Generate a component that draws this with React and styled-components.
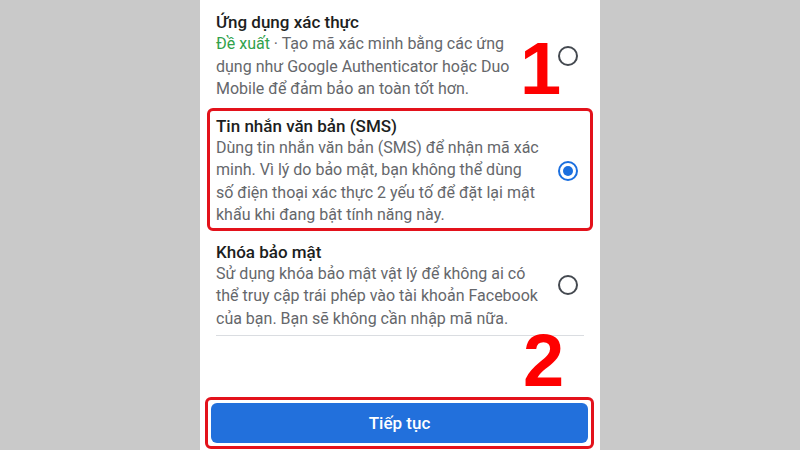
import React from 'react';
import styled, { createGlobalStyle } from 'styled-components';

const GlobalStyle = createGlobalStyle`
    html, body {
        margin: 0;
        padding: 0;
        background: #c9c9c9;
    }
    * {
        box-sizing: border-box;
    }
`

const Page = styled.div`
    width: 800px;
    height: 450px;
    display: flex;
    justify-content: center;
    background: #c9c9c9;
    overflow: hidden;
`

const Panel = styled.div`
    position: relative;
    width: 400px;
    height: 450px;
    background: #ffffff;
    display: flex;
    flex-direction: column;
    padding: 4px 7px 1px;
    font-family: Roboto, 'Noto Sans', sans-serif;
`

const OptionList = styled.div`
    display: flex;
    flex-direction: column;
    gap: 3px;
`

const Option = styled.div`
    display: flex;
    align-items: center;
    border: 3px solid ${props => props.highlighted ? '#e3121b' : 'transparent'};
    border-radius: 6px;
    padding: 4px 6px 1px;
`

const OptionText = styled.div`
    flex: 1;
    display: flex;
    flex-direction: column;
`

const Title = styled.div`
    font-size: 17px;
    font-weight: 500;
    line-height: 22px;
    color: #1c1e21;
`

const Line = styled.div`
    font-size: 16px;
    line-height: 22.5px;
    color: #65676b;
    white-space: nowrap;
`

const Recommended = styled.span`
    color: #31a24c;
`

const Radio = styled.span`
    position: relative;
    flex-shrink: 0;
    width: 20px;
    height: 20px;
    margin-right: 6px;
    border-radius: 50%;
    border: 2px solid ${props => props.checked ? '#1b6fdf' : '#444950'};

    &::after {
        content: '';
        display: ${props => props.checked ? 'block' : 'none'};
        position: absolute;
        top: 3px;
        left: 3px;
        width: 10px;
        height: 10px;
        border-radius: 50%;
        background: #1b6fdf;
    }
`

const Divider = styled.div`
    height: 1px;
    background: #dadde1;
    margin: 1px 9px 0;
`

const Spacer = styled.div`
    flex: 1;
`

const ButtonFrame = styled.div`
    border: 3px solid #e3121b;
    border-radius: 6px;
    padding: 3px;
    margin: 0 -1px 0 -2px;
`

const ContinueButton = styled.button`
    display: block;
    width: 100%;
    height: 40px;
    border: none;
    border-radius: 6px;
    background: #2270dc;
    color: #ffffff;
    font-family: Roboto, 'Noto Sans', sans-serif;
    font-size: 17px;
    font-weight: 500;
`

const StepNumber = styled.span`
    position: absolute;
    left: ${props => props.left}px;
    top: ${props => props.top}px;
    font-family: 'Liberation Sans', Arial, sans-serif;
    font-weight: 700;
    font-size: 74px;
    line-height: 1;
    color: #fe0000;
`

const options = [
    {
        title: 'Ứng dụng xác thực',
        recommended: true,
        lines: [
            ' · Tạo mã xác minh bằng các ứng',
            'dụng như Google Authenticator hoặc Duo',
            'Mobile để đảm bảo an toàn tốt hơn.',
        ],
    },
    {
        title: 'Tin nhắn văn bản (SMS)',
        checked: true,
        highlighted: true,
        lines: [
            'Dùng tin nhắn văn bản (SMS) để nhận mã xác',
            'minh. Vì lý do bảo mật, bạn không thể dùng',
            'số điện thoại xác thực 2 yếu tố để đặt lại mật',
            'khẩu khi đang bật tính năng này.',
        ],
    },
    {
        title: 'Khóa bảo mật',
        lines: [
            'Sử dụng khóa bảo mật vật lý để không ai có',
            'thể truy cập trái phép vào tài khoản Facebook',
            'của bạn. Bạn sẽ không cần nhập mã nữa.',
        ],
    },
]

const App = () => {
    return (
        <Page>
            <GlobalStyle />
            <Panel>
                <OptionList>
                    {options.map((option, index) => (
                        <Option key={index} highlighted={option.highlighted}>
                            <OptionText>
                                <Title>{option.title}</Title>
                                {option.lines.map((line, i) => (
                                    <Line key={i}>
                                        {option.recommended && i === 0 ? <Recommended>Đề xuất</Recommended> : null}
                                        {line}
                                    </Line>
                                ))}
                            </OptionText>
                            <Radio checked={option.checked} />
                        </Option>
                    ))}
                </OptionList>
                <Divider />
                <Spacer />
                <ButtonFrame>
                    <ContinueButton>Tiếp tục</ContinueButton>
                </ButtonFrame>
                <StepNumber left={320} top={32}>1</StepNumber>
                <StepNumber left={323} top={324}>2</StepNumber>
            </Panel>
        </Page>
    )
}

export default App;
